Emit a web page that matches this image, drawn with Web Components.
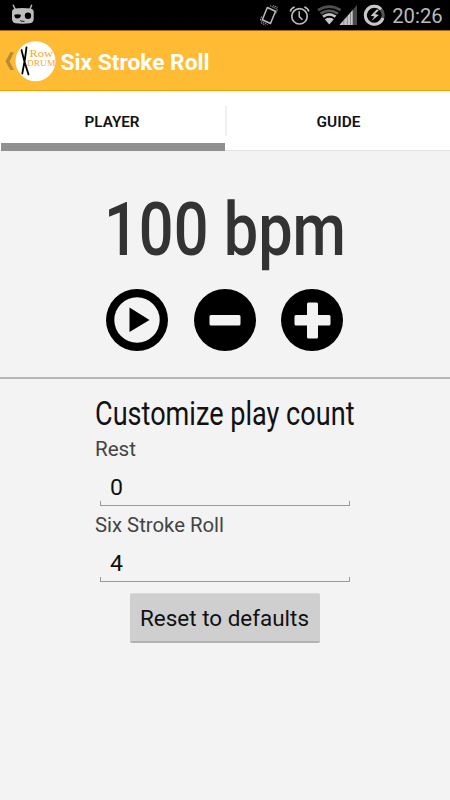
<!DOCTYPE html>
<html lang="en">
<head>
<meta charset="utf-8">
<title>Six Stroke Roll</title>
<style>
    body { margin: 0; background: #f3f3f3; }
</style>
</head>
<body>
<drum-app></drum-app>

<script>
// small helper: every element gets its template cloned into an open shadow root
function attach(el, html) {
    const template = document.createElement("template");
    template.innerHTML = html;
    el.attachShadow({mode: "open"}).appendChild(template.content.cloneNode(true));
}

// one line of text, condensed or stretched to the given length
// x and base are the start and the baseline inside the w * h box
class FitText extends HTMLElement {
    connectedCallback() {
        const a = (name, def) => this.getAttribute(name) || def;
        attach(this, `
<style>
    :host { display: block; flex: none; }
    svg { display: block; overflow: visible; }
    text { font-family: Roboto, "Liberation Sans", sans-serif; }
</style>
<svg width="${a("w")}" height="${a("h")}">
    <text x="${a("x", 0)}" y="${a("base")}" font-size="${a("size")}" font-weight="${a("weight", 400)}"
        fill="${a("color", "#111")}" textLength="${a("length")}" lengthAdjust="spacingAndGlyphs"></text>
</svg>`);
        this.shadowRoot.querySelector("text").textContent = a("label");
    }
}
customElements.define("fit-text", FitText);

class StatusBar extends HTMLElement {
    connectedCallback() {
        attach(this, `
<style>
    :host { display: flex; height: 30px; background: #000; }
    svg { display: block; flex: none; }
    .space { flex: 1; }
</style>
<svg width="40" height="30" viewBox="0 0 40 30">
    <path d="M13.300 5.200L15.300 9.500M31.600 5.200L29.800 9.500" stroke="#b8b8b8" stroke-width="1.500" stroke-linecap="round"/>
    <path d="M15 8.500Q22.500 7.400 30.500 8.500Q33.700 9 33.700 12V18.500Q33.700 22.800 30 23.300Q22.500 24.200 15.500 23.300Q12 22.800 12 18.500V12Q12 9 15 8.500Z" fill="#bdbdbd"/>
    <path d="M14.300 14.700Q17.500 14 21 14.800Q20.700 18.600 17.500 18.600Q14.500 18.500 14.300 14.700Z" fill="#000"/>
    <circle cx="28" cy="15.700" r="3.200"/>
    <path d="M20.200 20.600L22 21.300H24.500" stroke="#111" fill="none"/>
</svg>
<div class="space"></div>
<svg width="140" height="30" viewBox="250 0 140 30" fill="none">
    <g stroke="#bbb">
        <path d="M267.300 7.500L275.500 11.300L270.500 23.500L262.300 19.700Z" stroke-width="1.500" stroke-linejoin="round"/>
        <path d="M270 5.700L277.500 9.300L275.800 13.500M261.700 16.500L260.300 20.500L267.500 24.500M273 5.500L277.800 7.500M261 22.800L265.500 25.200" stroke-width=".9" stroke-dasharray="1.500 .8"/>
        <circle cx="299.500" cy="16.300" r="7.700" stroke-width="1.700"/>
        <path d="M299.200 11.300V16.600L302.500 19.800" stroke-width="1.500"/>
        <path d="M290.200 11.500Q291 8.200 294.700 7M304.300 7Q308 8.200 308.800 11.500" stroke-width="1.600"/>
    </g>
    <!-- wifi: two faint outer arcs, two lit inner ones -->
    <path d="M318 10.200Q329.300 3 340.600 10.200" stroke="#505050" stroke-width="2.600"/>
    <path d="M320.600 13.600Q329.300 7.800 338 13.600" stroke="#555" stroke-width="2.600"/>
    <path d="M323 16.700Q329.300 12.200 335.600 16.700" stroke="#c0c0c0" stroke-width="2.700"/>
    <path d="M324.800 19.300Q329.300 16.400 333.800 19.300L329.300 24.600Z" fill="#c8c8c8"/>
    <path d="M357 5V25H339.500Z" fill="#484848"/>
    <path d="M352.700 10V25H339.500Z" fill="#c8c8c8"/>
    <path d="M343.800 20V25M347.300 16V25M350.500 12.500V25" stroke="#777" stroke-width=".8"/>
    <circle cx="374.300" cy="15.200" r="9" stroke="#555" stroke-width="3"/>
    <path d="M381 9.200A9 9 0 1 0 382.900 18" stroke="#c8c8c8" stroke-width="3"/>
    <path d="M376.700 9.500L370.700 15.800L374.500 16.500L371.200 21.200L378.900 15L375 13.900L379 10Z" fill="#c8c8c8"/>
</svg>
<fit-text w="60" h="30" x="2.200" base="22.700" size="20.300" length="50.500" color="#bbb" label="20:26"></fit-text>`);
    }
}
customElements.define("status-bar", StatusBar);

class ActionBar extends HTMLElement {
    connectedCallback() {
        attach(this, `
<style>
    :host { display: flex; box-sizing: border-box; height: 61px; background: #ffbb33;
        border-top: 1px solid #9c6b13; border-bottom: 1px solid #f4a100; }
    svg { display: block; flex: none; }
</style>
<svg width="60" height="59" viewBox="0 31 60 59">
    <path d="M10.300 52.300H14L9.500 61.200L14 70H10.300L5.500 61.200Z" fill="#b78c35"/>
    <circle cx="35.500" cy="61.200" r="20" fill="#fff"/>
    <path d="M26.500 47.300L24.800 60L22.300 73.500M21.500 50L24.300 61L28.500 74.500" stroke="#000" stroke-width="1.800" stroke-linecap="round" fill="none"/>
    <g font-family="Liberation Serif, serif" fill="#f3a832">
        <text x="29.500" y="57.300" font-size="11" textLength="23.500" lengthAdjust="spacingAndGlyphs">Row</text>
        <text x="27" y="65.700" font-size="8.300" textLength="28.300" lengthAdjust="spacingAndGlyphs">DRUM</text>
    </g>
</svg>
<fit-text w="220" h="59" x=".5" base="38.700" size="22.800" weight="700" length="149" color="#fff" label="Six Stroke Roll"></fit-text>`);
    }
}
customElements.define("action-bar", ActionBar);

class TabBar extends HTMLElement {
    connectedCallback() {
        attach(this, `
<style>
    :host { display: grid; grid-template-columns: 225px 1fr; box-sizing: border-box; height: 60px;
        background: #fff; border-bottom: 1px solid #e2e2e2; }
    .tab { display: flex; flex-direction: column; justify-content: space-between; }
    .line { height: 8px; margin: 0 0 -1px 1px; background: #909090; }
    .next { flex-direction: row; justify-content: flex-start; }
    .split { width: 2px; height: 30px; margin-top: 15px; background: #efefef; }
</style>
<div class="tab">
    <fit-text w="225" h="52" x="84.500" base="35.700" size="14.400" weight="600" length="55" color="#111" label="PLAYER"></fit-text>
    <div class="line"></div>
</div>
<div class="tab next">
    <div class="split"></div>
    <fit-text w="223" h="59" x="89.600" base="35.700" size="14.400" weight="600" length="43.800" color="#111" label="GUIDE"></fit-text>
</div>`);
    }
}
customElements.define("tab-bar", TabBar);

// black disc, the slot takes the svg shapes drawn on it
class RoundButton extends HTMLElement {
    connectedCallback() {
        attach(this, `
<style>
    :host { display: grid; place-items: center; width: 62px; height: 62px; border-radius: 50%; background: #000; }
</style>
<slot></slot>`);
    }
}
customElements.define("round-button", RoundButton);

class TempoPlayer extends HTMLElement {
    connectedCallback() {
        attach(this, `
<style>
    :host { display: flex; flex-direction: column; box-sizing: border-box; height: 228px;
        border-bottom: 2px solid #b5b5b5; }
    .buttons { display: flex; justify-content: center; gap: 25.300px; margin-right: 1px; }
    svg { display: block; }
</style>
<fit-text w="450" h="138" x="104" base="104" size="74.500" weight="500" length="242" color="#333" label="100 bpm"></fit-text>
<div class="buttons">
    <round-button><svg width="62" height="62"><circle cx="31" cy="31" r="22.700" fill="#f3f3f3"/><path d="M23.500 18.500L43.500 31L23.500 43Z"/></svg></round-button>
    <round-button><svg width="62" height="62"><rect x="15.500" y="26" width="31" height="10.500" rx="1.500" fill="#f3f3f3"/></svg></round-button>
    <round-button><svg width="62" height="62"><path d="M27 13.500H35.500Q37 13.500 37 15V26H48Q49.500 26 49.500 27.500V35Q49.500 36.500 48 36.500H37V48Q37 49.500 35.500 49.500H27.500Q26 49.500 26 48V36.500H15Q13.500 36.500 13.500 35V27.500Q13.500 26 15 26H26V15Q26 13.500 27.500 13.500Z" fill="#f3f3f3"/></svg></round-button>
</div>`);
    }
}
customElements.define("tempo-player", TempoPlayer);

class CountField extends HTMLElement {
    connectedCallback() {
        const label = this.getAttribute("label");
        const value = this.getAttribute("value");
        attach(this, `
<style>
    :host { display: block; height: 76px; }
    .field { box-sizing: border-box; width: 250px; height: 5px; margin-left: 5px;
        border: 1px solid #9a9a9a; border-top: 0; }
</style>
<fit-text w="260" h="31" x="0" base="26" size="20" length="${this.getAttribute("length")}" color="#444" label="${label}"></fit-text>
<fit-text w="260" h="40" x="15" base="34" size="22.500" length="13" color="#111" label="${value}"></fit-text>
<div class="field"></div>`);
    }
}
customElements.define("count-field", CountField);

class ResetButton extends HTMLElement {
    connectedCallback() {
        attach(this, `
<style>
    :host { display: block; box-sizing: border-box; width: 190px; height: 50px; margin: 11px 0 0 34.500px;
        background: #cfcfcf; border-radius: 2px; border-bottom: 2px solid #b2b2b2; border-top: 1px solid #d8d8d8; }
</style>
<fit-text w="190" h="47" x="10" base="32" size="22.800" length="169" color="#111" label="Reset to defaults"></fit-text>`);
    }
}
customElements.define("reset-button", ResetButton);

class PlayCounts extends HTMLElement {
    connectedCallback() {
        attach(this, `
<style>
    :host { display: block; width: 260px; margin-left: 95px; }
</style>
<fit-text w="260" h="51" x="0" base="46.300" size="32.500" weight="400" length="259.500" color="#111" label="Customize play count"></fit-text>
<count-field label="Rest" value="0" length="41"></count-field>
<count-field label="Six Stroke Roll" value="4" length="129"></count-field>
<reset-button></reset-button>`);
    }
}
customElements.define("play-counts", PlayCounts);

class DrumApp extends HTMLElement {
    connectedCallback() {
        attach(this, `
<style>
    :host { display: flex; flex-direction: column; width: 450px; height: 800px; background: #f3f3f3; overflow: hidden; }
    play-counts { flex: 1; }
</style>
<status-bar></status-bar>
<action-bar></action-bar>
<tab-bar></tab-bar>
<tempo-player></tempo-player>
<play-counts></play-counts>`);
    }
}
customElements.define("drum-app", DrumApp);
</script>
</body>
</html>
